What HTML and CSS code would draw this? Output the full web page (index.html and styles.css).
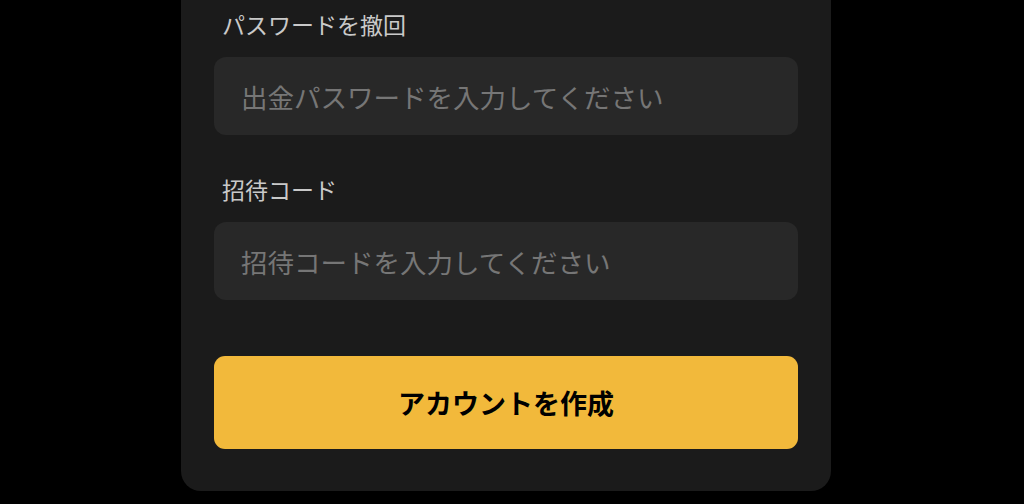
FILE: index.html
```html
<!DOCTYPE html>
<html lang="ja">
<head>
<meta charset="utf-8">
<title>アカウントを作成</title>
<link rel="stylesheet" href="styles.css">
</head>
<body>
<div class="page">
  <form class="card">
    <div class="field">
      <label class="label">パスワードを撤回</label>
      <div class="input">出金パスワードを入力してください</div>
    </div>
    <div class="field">
      <label class="label">招待コード</label>
      <div class="input">招待コードを入力してください</div>
    </div>
    <button type="button" class="submit">アカウントを作成</button>
  </form>
</div>
</body>
</html>
```

FILE: styles.css
```css
html, body {
  margin: 0;
  padding: 0;
  background: #000;
  height: 100%;
  overflow: hidden;
}
body {
  font-family: "Noto Sans CJK JP", "Noto Sans", sans-serif;
}
.page {
  display: flex;
  justify-content: center;
  padding-right: 12px;
}
.card {
  width: 650px;
  box-sizing: border-box;
  margin-top: -40px;
  padding: 51px 33px 42px 33px;
  background: #1b1b1b;
  border-radius: 20px;
  display: flex;
  flex-direction: column;
}
.field {
  display: flex;
  flex-direction: column;
  gap: 20px;
  margin-bottom: 41px;
}
.field + .field {
  margin-bottom: 56px;
}
.label {
  padding-left: 8px;
  font-size: 23px;
  line-height: 26px;
  color: #c9c9c9;
}
.input {
  height: 78px;
  box-sizing: border-box;
  display: flex;
  align-items: center;
  padding-left: 27px;
  background: #282828;
  border-radius: 12px;
  font-size: 26.5px;
  color: #767676;
}
.submit {
  height: 93px;
  border: none;
  border-radius: 11px;
  background: #f2b93b;
  color: #000;
  font-family: "Noto Sans CJK JP", "Noto Sans", sans-serif;
  font-size: 27px;
  font-weight: 700;
  padding: 0;
}
```
